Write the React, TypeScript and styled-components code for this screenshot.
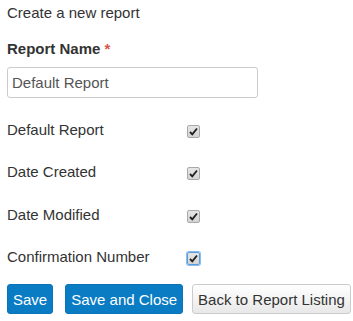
import React from "react";
import styled, { createGlobalStyle } from "styled-components";

const Global = createGlobalStyle`
  html, body { margin: 0; padding: 0; background: #fff; }
  body { font-family: "Liberation Sans", Arial, sans-serif; font-size: 15px; color: #333; }
`;

const Page = styled.div`
  padding: 4px 0 0 7px;
  width: 353px;
  box-sizing: border-box;
`;

const Title = styled.div`
  font-size: 15px;
  line-height: 17px;
  margin-bottom: 19px;
`;

const Label = styled.div`
  font-weight: bold;
  font-size: 15px;
  line-height: 17px;
  margin-bottom: 10px;
`;

const Req = styled.span`
  color: #d9534f;
`;

const Input = styled.input`
  box-sizing: border-box;
  width: 251px;
  height: 31px;
  border: 1px solid #ccc;
  border-radius: 3px;
  padding: 0 4px;
  font-family: "Liberation Sans", Arial, sans-serif;
  font-size: 15px;
  color: #555;
  outline: none;
  display: block;
`;

const Rows = styled.div`
  margin-top: 10px;
`;

const Row = styled.div`
  display: grid;
  grid-template-columns: 180px 13px;
  align-items: center;
  height: 42.5px;
`;

const RowLabel = styled.span`
  font-size: 15px;
  line-height: 17px;
`;

const Box = styled.span<{ $focus?: boolean }>`
  box-sizing: border-box;
  width: 13px;
  height: 13px;
  border: 1px solid ${(p) => (p.$focus ? "#5b9dd9" : "#a9a9a9")};
  border-radius: 2px;
  background: linear-gradient(#e6e6e6, #d4d4d4);
  display: flex;
  align-items: center;
  justify-content: center;
  margin-top: 4px;
  box-shadow: ${(p) => (p.$focus ? "0 0 0 1px #8bbbf0" : "none")};
`;

const Buttons = styled.div`
  display: flex;
  margin-top: 6px;
`;

const Btn = styled.button<{ $primary?: boolean; $gap?: number }>`
  box-sizing: border-box;
  flex-shrink: 0;
  white-space: nowrap;
  height: 30px;
  padding: 0 5px;
  margin-right: ${(p) => p.$gap ?? 0}px;
  border-radius: 3px;
  font-family: "Liberation Sans", Arial, sans-serif;
  font-size: 15px;
  cursor: pointer;
  border: 1px solid ${(p) => (p.$primary ? "#0a74b8" : "#ccc")};
  background: ${(p) => (p.$primary ? "#0a7cc4" : "linear-gradient(#fff, #e8e8e8)")};
  color: ${(p) => (p.$primary ? "#fff" : "#333")};
`;

const Check = () => (
  <svg width="9" height="9" viewBox="0 0 9 9">
    <path d="M1 5 L3.3 7.3 L8 1.5" fill="none" stroke="#222" strokeWidth="1.9" />
  </svg>
);

const items = ["Default Report", "Date Created", "Date Modified", "Confirmation Number"];

export default function App() {
  return (
    <Page>
      <Global />
      <Title>Create a new report</Title>
      <Label>
        Report Name <Req>*</Req>
      </Label>
      <Input defaultValue="Default Report" />
      <Rows>
        {items.map((t, i) => (
          <Row key={t}>
            <RowLabel>{t}</RowLabel>
            <Box $focus={i === items.length - 1}>
              <Check />
            </Box>
          </Row>
        ))}
      </Rows>
      <Buttons>
        <Btn $primary $gap={12}>Save</Btn>
        <Btn $primary $gap={9}>Save and Close</Btn>
        <Btn>Back to Report Listing</Btn>
      </Buttons>
    </Page>
  );
}
